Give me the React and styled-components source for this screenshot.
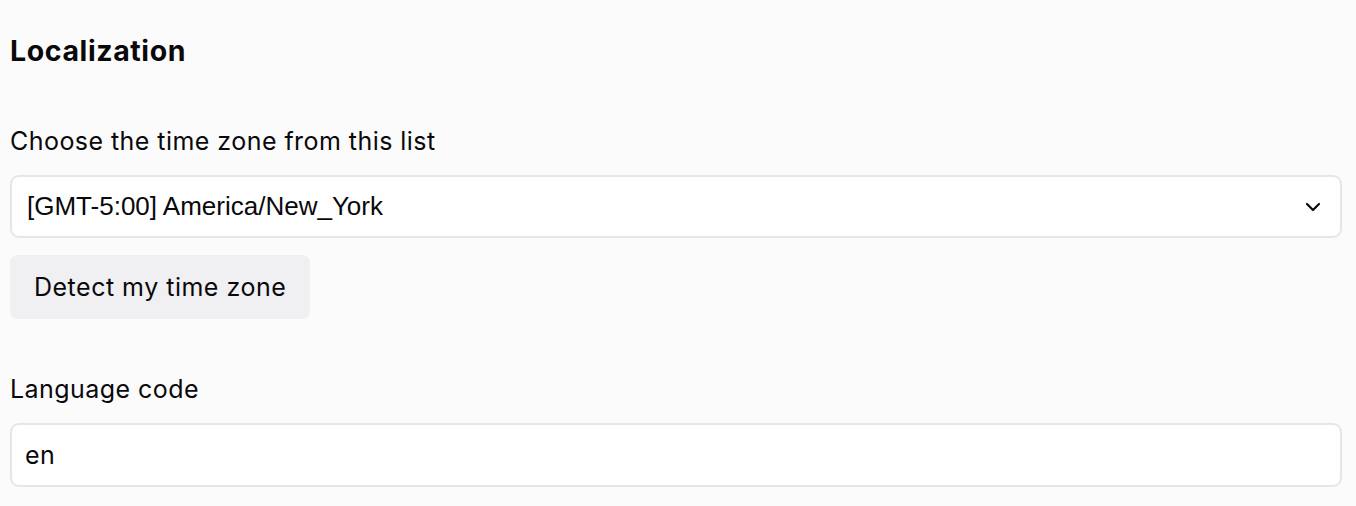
import styled, { createGlobalStyle } from "styled-components";

const Global = createGlobalStyle`
  html, body { margin: 0; padding: 0; background: #fcfbfc; }
  body { font-family: Inter, "Noto Sans", sans-serif; color: #09090b; }
`;

const Page = styled.div`
  padding: 31px 14px 0 10px;
  display: flex;
  flex-direction: column;
`;

const Heading = styled.h2`
  margin: 0 0 55px;
  font-size: 28.5px;
  font-weight: 700;
  line-height: 40px;
  letter-spacing: 0.6px;
`;

const Field = styled.div`
  display: flex;
  flex-direction: column;
  margin-bottom: ${(p) => p.gap || 0}px;
`;

const Label = styled.label`
  font-size: 25px;
  line-height: 30px;
  letter-spacing: 0.45px;
  margin-bottom: 19px;
`;

const Control = styled.div`
  height: ${(p) => p.h}px;
  box-sizing: border-box;
  border: 2px solid #e6e5e8;
  border-radius: 9px;
  background: #fff;
  display: flex;
  align-items: center;
  justify-content: space-between;
`;

const SelectBox = styled(Control)`
  padding: 0 15px 0 15px;
  font-family: "Liberation Sans", Arial, sans-serif;
  font-size: 26px;
`;

const TextInput = styled(Control)`
  padding: 0 13px;
  font-size: 25px;
  letter-spacing: 0.45px;
`;

const Button = styled.button`
  align-self: flex-start;
  margin-top: 17px;
  height: 64px;
  padding: 0 24px;
  border: none;
  border-radius: 8px;
  background: #f0eff2;
  color: #09090b;
  font-family: Inter, "Noto Sans", sans-serif;
  font-size: 25px;
  letter-spacing: 0.5px;
`;

const Chevron = () => (
  <svg width="24" height="24" viewBox="0 0 24 24" fill="none" stroke="#09090b" strokeWidth="2.2" strokeLinecap="round" strokeLinejoin="round">
    <path d="m6 9 6 6 6-6" />
  </svg>
);

export default function App() {
  return (
    <>
      <Global />
      <Page>
        <Heading>Localization</Heading>
        <Field gap={55}>
          <Label>Choose the time zone from this list</Label>
          <SelectBox h={63}>
            <span>[GMT-5:00] America/New_York</span>
            <Chevron />
          </SelectBox>
          <Button>Detect my time zone</Button>
        </Field>
        <Field>
          <Label>Language code</Label>
          <TextInput h={64}>en</TextInput>
        </Field>
      </Page>
    </>
  );
}
